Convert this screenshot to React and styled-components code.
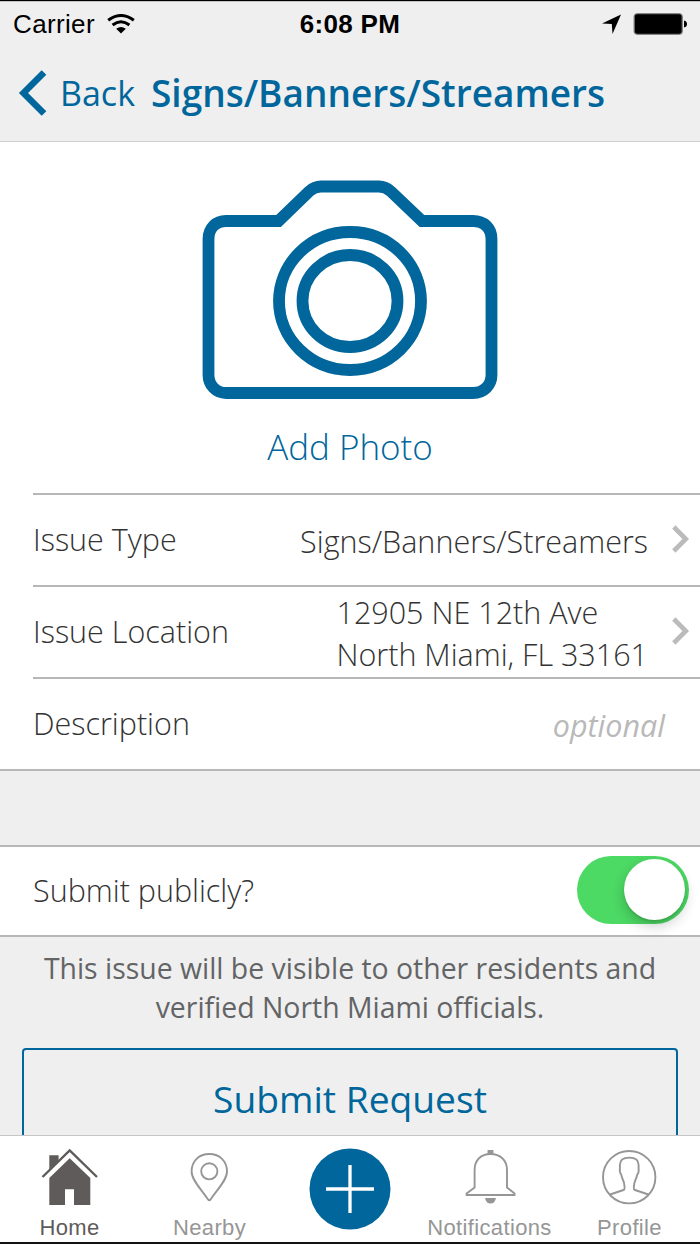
import styled, { createGlobalStyle } from 'styled-components';

const blue = '#00669b';
const grey = '#969696';

const GlobalStyle = createGlobalStyle`
 body {
  margin: 0;
  background-color: #efefef;
 }

 * {
  box-sizing: border-box;
 }

 svg {
  display: block;
 }
`;

const Screen = styled.main`
 display: flex;
 flex-direction: column;
 width: 700px;
 height: 1244px;
 overflow: hidden;
 border-top: 1px solid #000;
 border-bottom: 2px solid #111;
 background-color: #efefef;
 font-family: 'Open Sans', sans-serif;
 color: #333;
 white-space: nowrap;
`;

const StatusBar = styled.div`
 display: grid;
 grid-template-columns: 1fr auto 1fr;
 align-items: center;
 flex: none;
 height: 47px;
 padding: 0 13px 2px 13px;
 border-top: 1px solid #c4c4c4;
 font-family: 'Liberation Sans', sans-serif;
 font-size: 26px;
 line-height: 30px;
 color: #000;
`;

const Carrier = styled.div`
 display: flex;
 align-items: center;
 gap: 12px;
 letter-spacing: 0.35px;
`;

const Clock = styled.div`
 font-weight: 700;
 letter-spacing: 0.3px;
`;

const StatusIcons = styled.div`
 display: flex;
 align-items: center;
 justify-content: flex-end;
 gap: 12px;
`;

const NavBar = styled.header`
 display: flex;
 align-items: center;
 flex: none;
 height: 94px;
 padding: 0 18px 3px;
 border-bottom: 1px solid #cfcfcf;
 color: ${blue};
`;

const BackButton = styled.a`
 display: flex;
 align-items: center;
 gap: 13px;
 width: 133px;
 font-size: 34px;
 line-height: 48px;
`;

const Title = styled.h1`
 margin: 0;
 font-size: 37px;
 font-weight: 600;
 line-height: 48px;
`;

const PhotoSection = styled.section`
 display: flex;
 flex-direction: column;
 align-items: center;
 flex: none;
 height: 351px;
 padding-top: 38px;
 background-color: #fff;
`;

const AddPhoto = styled.div`
 margin-top: 21px;
 font-size: 35px;
 font-weight: 300;
 line-height: 52px;
 color: ${blue};
`;

const List = styled.section`
 flex: none;
 padding-left: 33px;
 border-bottom: 2px solid #b7b7b7;
 background-color: #fff;
`;

const Row = styled.div`
 display: flex;
 align-items: center;
 height: 92px;
 padding-right: ${(props) => props.$right || '10px'};
 border-top: 2px solid #b7b7b7;
`;

const Label = styled.div`
 flex: 1;
 padding-bottom: 2px;
 font-size: 30.5px;
 font-weight: 300;
 line-height: 42px;
`;

const Value = styled.div`
 padding-top: 2px;
 margin-right: 24px;
 font-size: 30.5px;
 font-weight: 300;
 line-height: 42px;
`;

const Optional = styled.div`
 padding-top: 1px;
 font-size: 30.5px;
 font-style: italic;
 line-height: 42px;
 color: #b9b9b9;
`;

const PublicRow = styled.section`
 display: flex;
 align-items: center;
 flex: none;
 height: 92px;
 margin-top: 74px;
 padding: 0 11px 0 33px;
 border-top: 2px solid #b7b7b7;
 border-bottom: 2px solid #b7b7b7;
 background-color: #fff;
`;

const Switch = styled.div`
 display: flex;
 align-items: center;
 justify-content: flex-end;
 width: 112px;
 height: 68px;
 margin-bottom: 2px;
 padding-right: 4px;
 border-radius: 34px;
 background-color: #4cd964;
`;

const Knob = styled.div`
 width: 61px;
 height: 61px;
 margin-bottom: 1px;
 border-radius: 50%;
 background-color: #fff;
 box-shadow: 0 6px 14px rgba(0, 0, 0, 0.2), 0 2px 2px rgba(0, 0, 0, 0.1);
`;

const Hint = styled.p`
 flex: none;
 height: 111px;
 margin: 0;
 padding-top: 12px;
 font-size: 28.4px;
 line-height: 39px;
 text-align: center;
 color: #636466;
`;

const ButtonArea = styled.div`
 flex: none;
 height: 87px;
 padding: 0 22px;
 overflow: hidden;
`;

const SubmitButton = styled.div`
 height: 104px;
 border: 2px solid ${blue};
 border-radius: 4px;
 font-size: 37.2px;
 line-height: 98px;
 text-align: center;
 color: ${blue};
`;

const TabBar = styled.nav`
 display: grid;
 grid-template-columns: repeat(5, 140px);
 flex: 1;
 border-top: 1px solid #c6c6c6;
 background-color: #fff;
`;

const Tab = styled.a`
 display: flex;
 flex-direction: column;
 align-items: center;
 gap: 3px;
 padding: 11px 1px 0 0;
 font-family: 'Liberation Sans', sans-serif;
 font-size: 22px;
 line-height: 26px;
 letter-spacing: 0.35px;
 color: ${(props) => (props.$active ? '#5f5b5b' : grey)};
`;

const AddTab = styled.a`
 display: flex;
 justify-content: center;
 padding-top: 12px;
`;

const Chevron = () => (
 <svg width='18' height='30' viewBox='0 0 18 30' fill='none' stroke='#bbb' strokeWidth='4.6'>
  <path d='M1.8 2 L13.8 14 L1.8 26' />
 </svg>
);

const Camera = () => (
 <svg width='296' height='220' viewBox='0 0 296 220' fill='none' stroke={blue} strokeWidth='11.8'>
  <path d='M24 41 H76.5 L107 11.5 Q112.5 6.5 119 6.5 H177 Q183.5 6.5 189 11.5 L220 41 H271 C282 41 289.5 48 289.5 59 V195 C289.5 205 282 213 271 213 H24 C14 213 6.5 205 6.5 195 V59 C6.5 48 14 41 24 41 Z' />
  <ellipse cx='148' cy='121' rx='71' ry='69' />
  <ellipse cx='148' cy='121' rx='47.5' ry='46' />
 </svg>
);

const Wifi = () => (
 <svg width='28' height='20' viewBox='0 0 28 20' fill='none' stroke='#000' strokeWidth='3'>
  <path d='M1.2 6.2 Q14 -3.2 26.8 6.2' />
  <path d='M5.6 11 Q14 4.6 22.4 11' />
  <path d='M9.2 14.8 Q14 11 18.8 14.8 L14 19.6 Z' fill='#000' stroke='none' />
 </svg>
);

const App = () => {
 return (
  <>
   <GlobalStyle />
   <Screen>
    <StatusBar>
     <Carrier>
      Carrier
      <Wifi />
     </Carrier>
     <Clock>6:08 PM</Clock>
     <StatusIcons>
      <svg width='20' height='20' viewBox='0 0 20 20'>
       <path d='M20 0.5 L11.5 20 L10.8 10 L1 9.5 Z' fill='#000' />
      </svg>
      <svg width='54' height='22' viewBox='0 0 54 22'>
       <rect x='1.2' y='0.75' width='48' height='20.5' rx='3' fill='#000' stroke='#777' strokeWidth='1.2' />
       <path d='M51 7.5 Q54 8 54 11 Q54 14 51 14.5 Z' fill='#000' />
      </svg>
     </StatusIcons>
    </StatusBar>
    <NavBar>
     <BackButton>
      <svg width='29' height='46' viewBox='0 0 29 46' fill='none' stroke={blue} strokeWidth='6.5'>
       <path d='M26 2.5 L5.5 23 L26 43.5' />
      </svg>
      Back
     </BackButton>
     <Title>Signs/Banners/Streamers</Title>
    </NavBar>
    <PhotoSection>
     <Camera />
     <AddPhoto>Add Photo</AddPhoto>
    </PhotoSection>
    <List>
     <Row>
      <Label>Issue Type</Label>
      <Value>Signs/Banners/Streamers</Value>
      <Chevron />
     </Row>
     <Row>
      <Label>Issue Location</Label>
      <Value>
       12905 NE 12th Ave
       <br />
       North Miami, FL 33161
      </Value>
      <Chevron />
     </Row>
     <Row $right='35px'>
      <Label>Description</Label>
      <Optional>optional</Optional>
     </Row>
    </List>
    <PublicRow>
     <Label>Submit publicly?</Label>
     <Switch>
      <Knob />
     </Switch>
    </PublicRow>
    <Hint>
     This issue will be visible to other residents and
     <br />
     verified North Miami officials.
    </Hint>
    <ButtonArea>
     <SubmitButton>Submit Request</SubmitButton>
    </ButtonArea>
    <TabBar>
     <Tab $active>
      <svg width='58' height='65' viewBox='0 0 58 65'>
       <path d='M8.3 8.3 H17.6 V14 L8.3 23 Z M28.7 11.3 L49.3 31 V58 H33 V42.3 H24 V58 H8.3 V31 Z' fill='#5f5b5b' />
       <path d='M1.5 30 L28.7 3.5 L56 30' fill='none' stroke='#5f5b5b' strokeWidth='2.4' />
      </svg>
      Home
     </Tab>
     <Tab>
      <svg width='58' height='65' viewBox='0 0 58 65' fill='none' stroke={grey} strokeWidth='1.9'>
       <path d='M28.3 53.2 Q27.3 53.2 26 51 C20 42 10.6 33 10.6 24.5 C10.6 14 18 7 28.3 7 C38.6 7 46 14 46 24.5 C46 33 36.6 42 30.6 51 Q29.3 53.2 28.3 53.2 Z' />
       <circle cx='28.3' cy='24.3' r='8.1' />
      </svg>
      Nearby
     </Tab>
     <AddTab>
      <svg width='82' height='82' viewBox='0 0 82 82'>
       <circle cx='41' cy='41' r='40.5' fill={blue} />
       <path d='M17 41 H65 M41 17 V65' stroke='#fff' strokeWidth='3.3' />
      </svg>
     </AddTab>
     <Tab>
      <svg width='58' height='65' viewBox='0 0 58 65' fill='none' stroke={grey} strokeWidth='1.9'>
       <path d='M13.6 40.5 V23 C13.6 13 20 7 29.5 7 C39 7 46 13 46 23 V40.5 L53.5 46.5 V48 H5.6 V46.5 Z' />
       <path d='M27.5 7 V4 H31.5 V7 Z' fill={grey} />
       <path d='M24 51 H35 Q34 56.5 29.5 56.5 Q25 56.5 24 51 Z' fill={grey} stroke='none' />
      </svg>
      Notifications
     </Tab>
     <Tab>
      <svg width='58' height='65' viewBox='0 0 58 65' fill='none' stroke={grey} strokeWidth='1.9'>
       <circle cx='28.2' cy='30.2' r='26.2' />
       <path d='M9 47.5 L22.5 43 Q23.8 42.5 23.6 40 Q23.5 35.5 21.6 32 Q20.6 30 20.4 28 Q18.3 25.5 18.9 21.5 V18 C18.9 13 22 10.6 28.2 10.6 C34.4 10.6 37.6 13 37.6 18 V21.5 Q38.2 25.5 36.1 28 Q35.8 30 34.8 32 Q33 35.5 32.8 40 Q32.6 42.5 34 43 L47.4 47.5' />
      </svg>
      Profile
     </Tab>
    </TabBar>
   </Screen>
  </>
 );
};

export default App;
